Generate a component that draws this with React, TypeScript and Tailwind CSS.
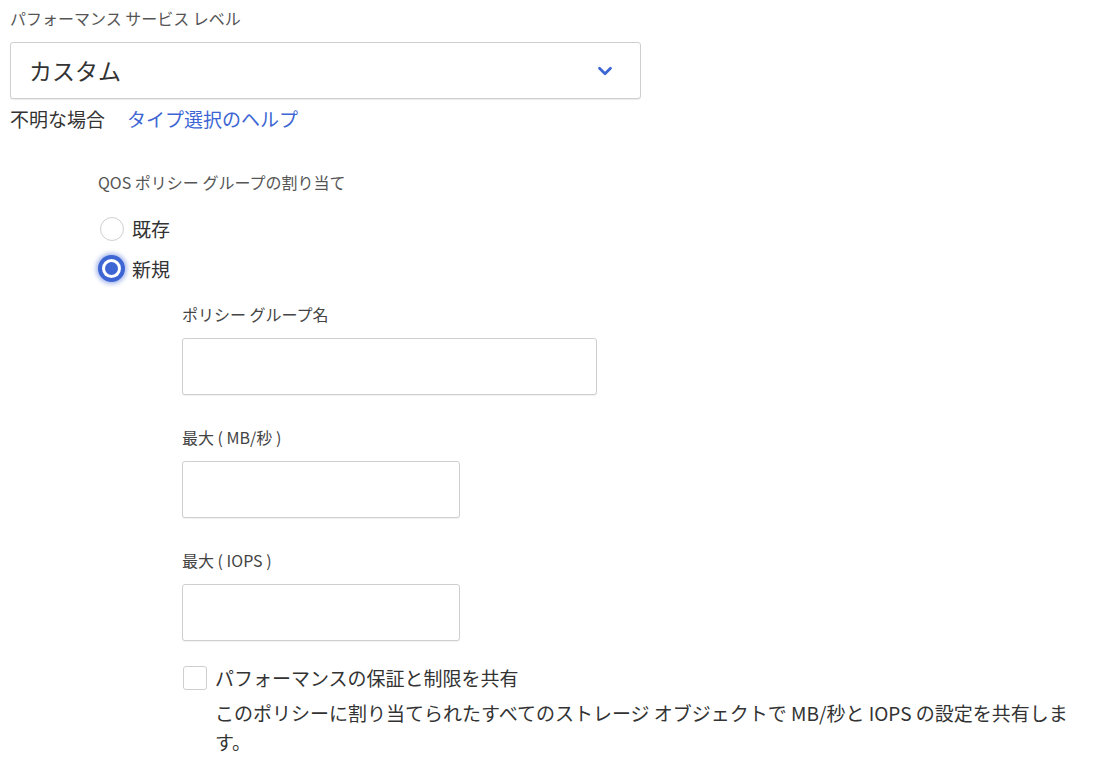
import { ChevronDown } from 'lucide-react';

const font = { fontFamily: '"Noto Sans CJK JP", "Noto Sans", sans-serif' };

function Field({ label, wide }: { label: string; wide?: boolean }) {
  return (
    <div className="flex flex-col">
      <label className="text-[16px] leading-5 text-[#444]">{label}</label>
      <input
        className={`mt-[14px] h-[57px] rounded-[3px] border border-[#cfcfcf] bg-white shadow-[0_1px_1px_rgba(0,0,0,0.06)] ${wide ? 'w-[415px]' : 'w-[278px]'}`}
      />
    </div>
  );
}

export default function App() {
  return (
    <div className="min-h-screen bg-white px-[10px] pt-[6px] text-[#333]" style={font}>
      <div className="text-[16px] leading-6 text-[#555]">パフォーマンス サービス レベル</div>
      <div className="mt-[12px] flex h-[57px] w-[631px] items-center justify-between rounded-[3px] border border-[#cfcfcf] bg-white pl-[18px] pr-[24px] shadow-[0_1px_1px_rgba(0,0,0,0.08)]">
        <span className="text-[23px] text-[#333]">カスタム</span>
        <ChevronDown className="h-[22px] w-[22px] text-[#3d66d4]" strokeWidth={3} />
      </div>
      <div className="mt-[8px] flex items-center gap-[22px] text-[19px] leading-6">
        <span>不明な場合</span>
        <a className="text-[#3d66d4]">タイプ選択のヘルプ</a>
      </div>

      <div className="ml-[88px] mt-[39px]">
        <div className="text-[16px] leading-6 text-[#555]">QOS ポリシー グループの割り当て</div>
        <div className="mt-[23px] flex flex-col gap-[14px]">
          <label className="flex items-center gap-[8px] text-[19px] leading-6">
            <span className="ml-[2px] h-[24px] w-[24px] rounded-full border border-[#cfcfcf] bg-white" />
            既存
          </label>
          <label className="flex items-center gap-[7px] text-[19px] leading-6">
            <span className="flex h-[27px] w-[27px] items-center justify-center rounded-full bg-[#3d66d4] shadow-[0_0_4px_2px_rgba(61,102,212,0.45)]">
              <span className="flex h-[19px] w-[19px] items-center justify-center rounded-full bg-white">
                <span className="h-[13px] w-[13px] rounded-full bg-[#3d66d4]" />
              </span>
            </span>
            新規
          </label>
        </div>

        <div className="ml-[84px] mt-[22px] flex flex-col gap-[32px]">
          <Field label="ポリシー グループ名" wide />
          <Field label="最大 ( MB/秒 )" />
          <Field label="最大 ( IOPS )" />
        </div>

        <div className="ml-[85px] mt-[25px]">
          <label className="flex items-center gap-[8px] text-[19px] leading-6">
            <span className="h-[24px] w-[24px] rounded-[3px] border border-[#cfcfcf] bg-white" />
            パフォーマンスの保証と制限を共有
          </label>
          <p className="ml-[32px] mt-[8px] w-[868px] text-[19px] leading-[29px] text-[#333]">
            このポリシーに割り当てられたすべてのストレージ オブジェクトで MB/秒と IOPS の設定を共有します。
          </p>
        </div>
      </div>
    </div>
  );
}
